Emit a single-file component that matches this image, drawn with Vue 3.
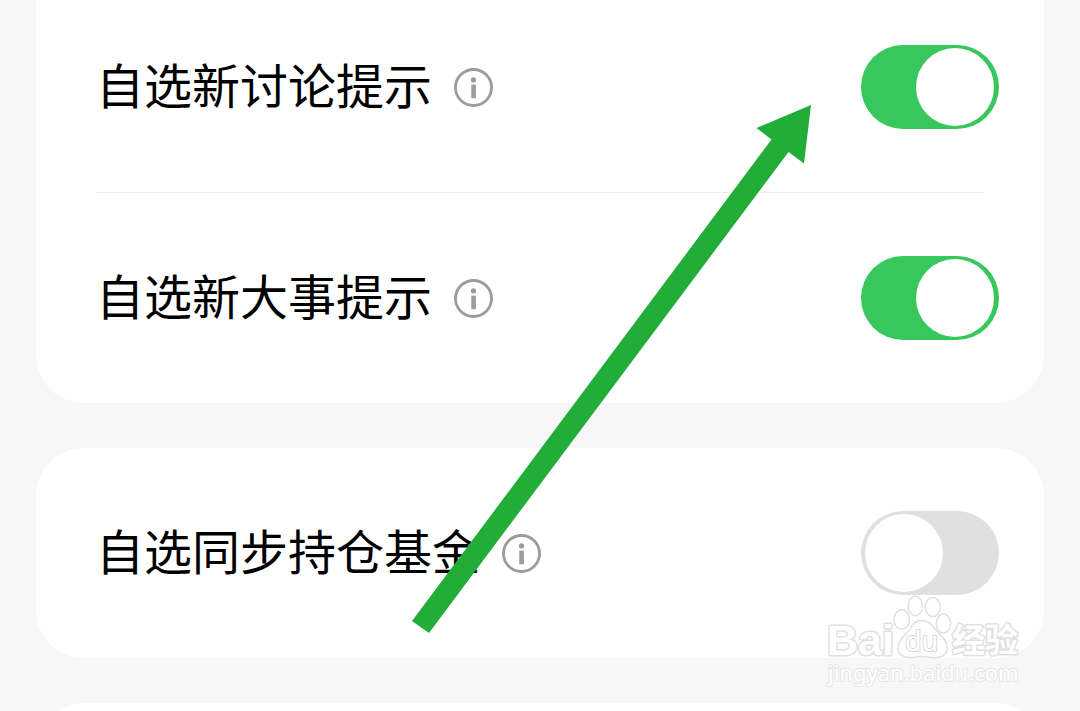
<script setup>
import { ref } from 'vue'

const groups = ref([
  [
    { id: 'discussion', label: '自选新讨论提示', on: true },
    { id: 'events', label: '自选新大事提示', on: true },
  ],
  [{ id: 'holdings', label: '自选同步持仓基金', on: false }],
])
</script>

<template>
  <main class="page">
    <section v-for="(group, i) in groups" :key="i" class="card">
      <div v-for="item in group" :key="item.id" class="row">
        <label class="label" :for="item.id">{{ item.label }}</label>
        <button class="info" type="button" :aria-label="item.label">
          <svg viewBox="0 0 40 40" aria-hidden="true">
            <circle cx="20" cy="20" r="18.5" fill="none" stroke="#9c9c9c" stroke-width="2.9" />
            <circle cx="20" cy="12.2" r="2.7" fill="#9c9c9c" />
            <rect x="17.7" y="17" width="4.8" height="14" fill="#9c9c9c" />
          </svg>
        </button>
        <input :id="item.id" v-model="item.on" class="switch" type="checkbox" role="switch" />
      </div>
    </section>
    <section class="card next"></section>

    <svg class="arrow" viewBox="412 105 399 528" aria-hidden="true">
      <polygon points="412,621 771.5,139.5 756.5,128 811,105 804,163.5 788.5,152 429,633" fill="#22ac38" />
    </svg>

    <svg class="watermark" viewBox="820 590 210 100" role="img" aria-label="Baidu 经验">
      <g class="outline">
        <text class="latin" x="827" y="655">Bai</text>
        <path d="M922 620.5c-6 0-9 3-11 7-3 6-13 11-13 20 0 7 5 10 11 10 5 0 9-1 13-1s8 1 13 1c7 0 12-3 12-10 0-9-9-14-13-20-3-4-6-7-12-7Z" />
        <ellipse cx="901.8" cy="619.5" rx="7.8" ry="9.8" />
        <ellipse cx="915.3" cy="606" rx="7.2" ry="9.8" />
        <ellipse cx="932.8" cy="607" rx="7.6" ry="9.5" />
        <ellipse cx="943.5" cy="623.5" rx="7.2" ry="9.5" />
        <text class="du" x="905" y="651">du</text>
        <text class="han" x="952" y="652">经验</text>
        <text class="url" x="828" y="681">jingyan.baidu.com</text>
      </g>
    </svg>
  </main>
</template>

<style>
body {
  background: #f7f7f7;
}
</style>

<style scoped>
.page {
  position: relative;
  box-sizing: border-box;
  height: 100vh;
  overflow: hidden;
  padding: 0 36px;
  background: #f7f7f7;
  font-family: "Noto Sans CJK SC", sans-serif;
}

.card {
  margin-bottom: 45px;
  border-radius: 48px;
  background: #fff;
}

.card:first-child {
  border-top-left-radius: 0;
  border-top-right-radius: 0;
}

.card.next {
  height: 210px;
  margin-bottom: 0;
}

.row {
  position: relative;
  display: flex;
  align-items: center;
  padding: 63px 45px 63px 60px;
}

.card:first-child .row:first-child {
  padding-top: 45px;
}

.row + .row {
  margin-top: 1px;
}

.row + .row::before {
  content: "";
  position: absolute;
  top: -1px;
  left: 60px;
  right: 60px;
  height: 1px;
  background: #ececec;
}

.label {
  padding-bottom: 8px;
  color: #000;
  font-size: 48px;
  line-height: 72px;
}

.info {
  width: 39px;
  height: 39px;
  margin: 0 auto 0 22px;
  padding: 0;
  border: 0;
  background: none;
}

.info svg {
  display: block;
  width: 100%;
  height: 100%;
}

.switch {
  appearance: none;
  box-sizing: border-box;
  width: 138px;
  height: 84px;
  margin: 0;
  padding: 3px 5px 3px 4px;
  border-radius: 42px;
  background: #e0e0e0;
}

.switch::before {
  content: "";
  display: block;
  width: 78px;
  height: 78px;
  border-radius: 50%;
  background: #fff;
}

.switch:checked {
  background: #37c75b;
}

.switch:checked::before {
  margin-left: auto;
}

.arrow {
  position: absolute;
  top: 105px;
  left: 412px;
  width: 399px;
  height: 528px;
  pointer-events: none;
}

.watermark {
  position: absolute;
  top: 590px;
  right: 50px;
  width: 210px;
  height: 100px;
  pointer-events: none;
}

.outline {
  fill: #fff;
  stroke: #e0e0e0;
  stroke-width: 1.5px;
  stroke-linejoin: round;
}

.outline text {
  paint-order: stroke;
  stroke-width: 3px;
}

.latin {
  font: bold 43px "Liberation Sans", sans-serif;
}

.outline .du {
  font: 27px "Noto Sans", sans-serif;
  stroke: #d8d8d8;
  stroke-width: 2px;
}

.han {
  font: bold 33px "Noto Sans CJK SC", sans-serif;
}

.outline .url {
  font: 22px "Noto Sans", sans-serif;
  stroke: #e6e6e6;
  stroke-width: 2px;
}
</style>
